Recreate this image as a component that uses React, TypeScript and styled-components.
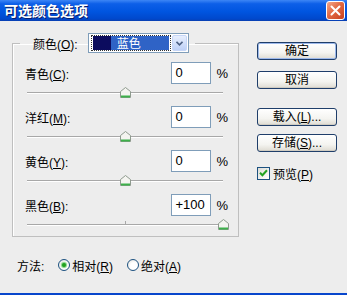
import React from "react";
import styled, { createGlobalStyle } from "styled-components";

const GlobalStyle = createGlobalStyle`
  html, body { margin: 0; padding: 0; width: 347px; height: 295px; overflow: hidden; background: #EDEDED; }
  body { font-family: "Liberation Sans", "Noto Sans CJK SC", sans-serif; font-size: 12px; color: #000; }
`;

const Window = styled.div`
  width: 347px;
  height: 295px;
  box-sizing: border-box;
  display: flex;
  flex-direction: column;
  background: #EDEDED;
  border-bottom: 2px solid #0846CC;
`;

const TitleBar = styled.div`
  height: 21px;
  flex: none;
  display: flex;
  align-items: center;
  justify-content: space-between;
  padding: 0 2px 0 4px;
  background: linear-gradient(to bottom, #3D86F5 0%, #0D5FE8 18%, #0055E0 55%, #0048CC 90%, #0A3FB0 100%);
`;

const Title = styled.span`
  color: #fff;
  font-family: "Noto Sans CJK SC", sans-serif;
  font-weight: 700;
  font-size: 14px;
  line-height: 21px;
  text-shadow: 1px 1px 0 #0A1E6B;
`;

const CloseButton = styled.div`
  width: 19px;
  height: 19px;
  box-sizing: border-box;
  border: 1px solid #fff;
  border-radius: 3px;
  background: linear-gradient(135deg, #F2A88C 0%, #E26A45 45%, #C8401E 100%);
  display: flex;
  align-items: center;
  justify-content: center;
`;

const Body = styled.div`
  flex: 1;
  display: flex;
  padding: 12px 0 0 12px;
`;

const LeftCol = styled.div`
  width: 227px;
  display: flex;
  flex-direction: column;
`;

const Group = styled.fieldset`
  margin: 0;
  min-width: 0;
  padding: 9px 10px 0 12px;
  border: 1px solid #BFBFBF;
  box-shadow: inset 1px 1px 0 #fff;
`;

const Legend = styled.legend`
  margin-left: -5px;
  padding: 0 6px 0 13px;
`;

const LegendInner = styled.div`
  display: flex;
  align-items: center;
  gap: 10px;
  height: 20px;
`;

const Label = styled.span`
  flex: 1;
  white-space: nowrap;
`;

const Key = styled.span`
  text-decoration: underline;
  text-underline-offset: 1px;
`;

const Select = styled.div`
  width: 101px;
  height: 20px;
  box-sizing: border-box;
  border: 1px solid #7F9DB9;
  background: #fff;
  display: flex;
  align-items: center;
  padding: 1px 1px 1px 2px;
  gap: 1px;
`;

const FocusBox = styled.div`
  flex: 1;
  height: 16px;
  box-sizing: border-box;
  border: 1px dotted #333;
  display: flex;
  padding: 0 1px;
  align-items: center;
`;

const Swatch = styled.div`
  width: 18px;
  height: 14px;
  background: #0C0C5E;
`;

const Selected = styled.div`
  flex: 1;
  height: 14px;
  background: #2F63C6;
  color: #fff;
  line-height: 14px;
  padding-left: 6px;
  font-family: "Noto Sans CJK SC", sans-serif;
`;

const ArrowButton = styled.div`
  width: 15px;
  height: 16px;
  border-radius: 2px;
  background: linear-gradient(to bottom, #E8EFFD, #BDD0F7);
  border: 1px solid #C6D6F7;
  box-sizing: border-box;
  display: flex;
  align-items: center;
  justify-content: center;
`;

const Row = styled.div`
  height: 22px;
  display: flex;
  align-items: center;
`;

const NumberField = styled.div`
  width: 40px;
  height: 22px;
  box-sizing: border-box;
  border: 1px solid #7F9DB9;
  background: #fff;
  padding-left: 3px;
  font-size: 13px;
  line-height: 20px;
`;

const Percent = styled.span`
  margin-left: 5px;
  font-size: 13px;
`;

const Slider = styled.div<{ $short?: boolean }>`
  position: relative;
  height: ${(p) => (p.$short ? 20 : 22)}px;
  margin: 0 5px 0 2px;
`;

const Track = styled.div`
  position: relative;
  top: 8px;
  height: 1px;
  background: #A8A8A8;
  border-bottom: 1px solid #fff;
`;

const Tick = styled.div`
  position: absolute;
  left: 50%;
  top: 5px;
  width: 1px;
  height: 3px;
  background: #A8A8A8;
`;

const Thumb = styled.svg`
  position: absolute;
  top: 3px;
  width: 11px;
  height: 11px;
  margin-left: -5px;
`;

const MethodRow = styled.div`
  margin-top: 20px;
  padding-left: 5px;
  height: 16px;
  display: flex;
  align-items: center;
  gap: 14px;
`;

const RadioOption = styled.div`
  display: flex;
  align-items: center;
  gap: 2px;
`;

const Radio = styled.div<{ $checked?: boolean }>`
  width: 12px;
  height: 12px;
  box-sizing: border-box;
  border-radius: 50%;
  border: 1px solid #1C5180;
  background: radial-gradient(circle at 60% 60%, #fff 40%, #DCDCD7 100%);
  display: flex;
  align-items: center;
  justify-content: center;
  &::after {
    content: "";
    display: ${(p) => (p.$checked ? "block" : "none")};
    width: 4px;
    height: 4px;
    border-radius: 50%;
    background: #21A121;
    box-shadow: 0 0 1px 1px #7CD27C;
  }
`;

const RightCol = styled.div`
  margin-left: 18px;
  padding-top: 9px;
  width: 80px;
  display: flex;
  flex-direction: column;
`;

const Button = styled.div<{ $default?: boolean; $gap?: number }>`
  height: 18px;
  margin-top: ${(p) => p.$gap ?? 0}px;
  box-sizing: border-box;
  border: 1px solid #1F3E6A;
  border-radius: 3px;
  background: linear-gradient(to bottom, #FFFFFF 0%, #F4F4F0 60%, #DEDBD2 100%);
  box-shadow: ${(p) => (p.$default ? "inset 0 0 0 1px #9DB9EB" : "inset 0 -1px 0 #D0CCC2")};
  display: flex;
  align-items: center;
  justify-content: center;
  line-height: 16px;
`;

const CheckRow = styled.div`
  margin-top: 13px;
  height: 16px;
  display: flex;
  align-items: center;
  gap: 3px;
`;

const CheckBox = styled.div`
  width: 13px;
  height: 13px;
  box-sizing: border-box;
  border: 1px solid #1C5180;
  background: linear-gradient(135deg, #DCDCD7, #fff);
  display: flex;
  align-items: center;
  justify-content: center;
`;

type Channel = { name: string; key: string; value: string; pos: number };

const channels: Channel[] = [
  { name: "青色", key: "C", value: "0", pos: 50 },
  { name: "洋红", key: "M", value: "0", pos: 50 },
  { name: "黄色", key: "Y", value: "0", pos: 50 },
  { name: "黑色", key: "B", value: "+100", pos: 100 },
];

const ThumbIcon = ({ left }: { left: number }) => (
  <Thumb viewBox="0 0 11 11" style={{ left: `${left}%` }}>
    <path d="M0.5 4.5 L5.5 0.5 L10.5 4.5 V10.5 H0.5 Z" fill="#F4F4F0" stroke="#8E9A8E" />
    <path d="M1 9.5 H10" stroke="#3DB04A" strokeWidth="2" />
  </Thumb>
);

export default function App() {
  return (
    <>
      <GlobalStyle />
      <Window>
        <TitleBar>
          <Title>可选颜色选项</Title>
          <CloseButton>
            <svg width="11" height="11" viewBox="0 0 11 11">
              <path d="M1.5 1.5 L9.5 9.5 M9.5 1.5 L1.5 9.5" stroke="#fff" strokeWidth="2" strokeLinecap="round" />
            </svg>
          </CloseButton>
        </TitleBar>
        <Body>
          <LeftCol>
            <Group>
              <Legend>
                <LegendInner>
                  <span>
                    颜色(<Key>O</Key>):
                  </span>
                  <Select>
                    <FocusBox>
                      <Swatch />
                      <Selected>蓝色</Selected>
                    </FocusBox>
                    <ArrowButton>
                      <svg width="7" height="5" viewBox="0 0 7 5">
                        <path d="M0.5 0.8 L3.5 3.8 L6.5 0.8" fill="none" stroke="#4D6185" strokeWidth="1.6" />
                      </svg>
                    </ArrowButton>
                  </Select>
                </LegendInner>
              </Legend>
              {channels.map((c, i) => (
                <React.Fragment key={c.key}>
                  <Row>
                    <Label>
                      {c.name}(<Key>{c.key}</Key>):
                    </Label>
                    <NumberField>{c.value}</NumberField>
                    <Percent>%</Percent>
                  </Row>
                  <Slider $short={i === channels.length - 1}>
                    <Track />
                    <Tick />
                    <ThumbIcon left={c.pos} />
                  </Slider>
                </React.Fragment>
              ))}
            </Group>
            <MethodRow>
              <span>方法:</span>
              <RadioOption>
                <Radio $checked />
                <span>
                  相对(<Key>R</Key>)
                </span>
              </RadioOption>
              <RadioOption>
                <Radio />
                <span>
                  绝对(<Key>A</Key>)
                </span>
              </RadioOption>
            </MethodRow>
          </LeftCol>
          <RightCol>
            <Button $default>确定</Button>
            <Button $gap={11}>取消</Button>
            <Button $gap={19}>
              载入(<Key>L</Key>)...
            </Button>
            <Button $gap={8}>
              存储(<Key>S</Key>)...
            </Button>
            <CheckRow>
              <CheckBox>
                <svg width="9" height="8" viewBox="0 0 9 8">
                  <path d="M1 3.8 L3.4 6.2 L8 1.2" fill="none" stroke="#21A121" strokeWidth="2" />
                </svg>
              </CheckBox>
              <span>
                预览(<Key>P</Key>)
              </span>
            </CheckRow>
          </RightCol>
        </Body>
      </Window>
    </>
  );
}
